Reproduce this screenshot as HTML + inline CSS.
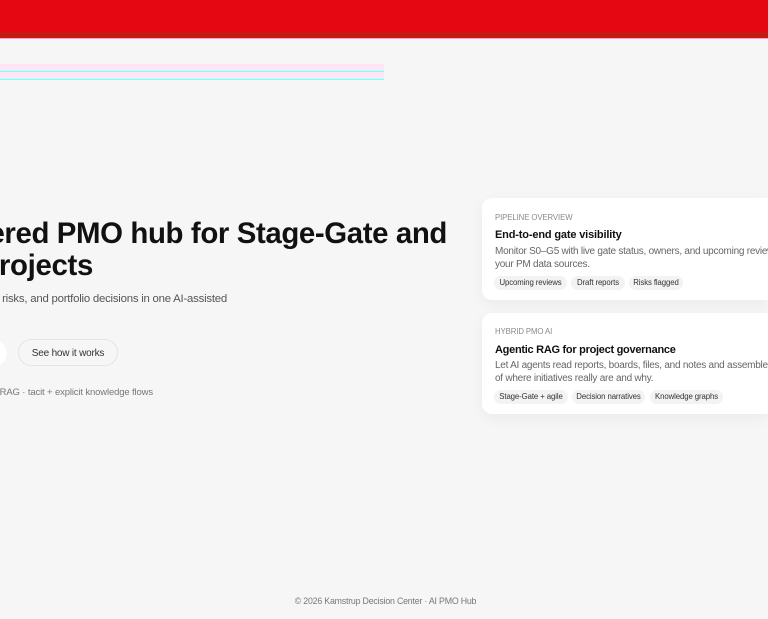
<!DOCTYPE html>
<html lang="en">
<head>
<meta charset="utf-8">
<title>Kamstrup Decision Center</title>
<style>
html,body{margin:0;padding:0;width:768px;height:619px;overflow:hidden;background:#f6f6f6;font-family:"Liberation Sans",sans-serif;color:#111}
#w{position:absolute;left:0;top:0;width:768px;height:619px;overflow:hidden;contain:paint}
.a{position:absolute;white-space:nowrap}
.hdr{position:absolute;left:0;top:0;width:768px;height:32px;background:#e50812}
.hdr2{position:absolute;left:0;top:32px;width:768px;height:6px;background:#c41a12}
.hdr3{position:absolute;left:0;top:38px;width:768px;height:1px;background:#ff9fd0}
.bar{position:absolute;left:0;width:384px}
.card{position:absolute;left:482px;width:286px;background:#fff;border-radius:10px 0 0 10px;box-shadow:0 4px 14px rgba(0,0,0,.05)}
.ey{position:absolute;left:495px;font-size:7.8px;letter-spacing:-.1px;color:#8a8a8a;white-space:nowrap}
.t{position:absolute;left:495px;font-size:11px;font-weight:bold;color:#111;white-space:nowrap}
.d{position:absolute;left:495px;width:273px;overflow:hidden;font-size:10px;letter-spacing:-.25px;color:#666;white-space:nowrap}
.c{position:absolute;height:14px;line-height:14px;background:#f3f3f3;border-radius:7px;font-size:7.8px;letter-spacing:-.1px;color:#333;text-align:center;white-space:nowrap}
</style>
</head>
<body>
<div id="w">
<div class="hdr"></div><div class="hdr2"></div><div class="hdr3"></div>
<div class="bar" style="top:64px;height:16px;background:#ffe4f5"></div>
<div class="bar" style="top:70px;height:1px;background:#c6fbf5"></div>
<div class="bar" style="top:71px;height:1px;background:#7ffcf5"></div>
<div class="bar" style="top:78px;height:1px;background:#c6fbf5"></div>
<div class="bar" style="top:79px;height:1px;background:#7ffcf5"></div>

<div class="a" style="right:321px;top:216px;font-size:29.4px;letter-spacing:-.38px;line-height:36px;font-weight:bold;color:#111">AI-powered PMO hub for Stage-Gate and</div>
<div class="a" style="right:675px;top:248px;font-size:29.4px;letter-spacing:-.33px;line-height:36px;font-weight:bold;color:#111">agile projects</div>
<div class="a" style="right:541px;top:292px;font-size:11.4px;letter-spacing:-.23px;line-height:15px;color:#555">Bring gates, risks, and portfolio decisions in one AI-assisted</div>

<div class="a" style="left:-60px;top:340px;width:67px;height:26px;background:#fff;border-radius:13px"></div>
<div class="a" style="left:18px;top:339px;width:98px;height:25px;border:1px solid #e4e4e4;border-radius:14px;text-align:center;line-height:27px;font-size:10px;letter-spacing:-.2px;color:#333">See how it works</div>
<div class="a" style="right:615px;top:386px;font-size:9.5px;letter-spacing:-.14px;line-height:13px;color:#777">Agentic RAG · tacit + explicit knowledge flows</div>

<div class="card" style="top:198px;height:102px"></div>
<div class="ey" style="top:213px">PIPELINE OVERVIEW</div>
<div class="t" style="top:229px;letter-spacing:-.16px">End-to-end gate visibility</div>
<div class="d" style="top:246px">Monitor S0–G5 with live gate status, owners, and upcoming reviews from</div>
<div class="d" style="top:259px">your PM data sources.</div>
<div class="c" style="left:494px;top:276px;width:73px">Upcoming reviews</div>
<div class="c" style="left:571px;top:276px;width:54px">Draft reports</div>
<div class="c" style="left:629px;top:276px;width:54px">Risks flagged</div>

<div class="card" style="top:313px;height:101px"></div>
<div class="ey" style="top:327px">HYBRID PMO AI</div>
<div class="t" style="top:344px;letter-spacing:-.28px">Agentic RAG for project governance</div>
<div class="d" style="top:360px">Let AI agents read reports, boards, files, and notes and assemble a view</div>
<div class="d" style="top:373px">of where initiatives really are and why.</div>
<div class="c" style="left:494px;top:390px;width:74px">Stage-Gate + agile</div>
<div class="c" style="left:572px;top:390px;width:73px">Decision narratives</div>
<div class="c" style="left:650px;top:390px;width:73px">Knowledge graphs</div>

<div class="a" style="left:0;width:768px;top:595px;text-align:center;text-indent:3px;font-size:8.8px;letter-spacing:-.2px;line-height:12px;color:#777">© 2026 Kamstrup Decision Center · AI PMO Hub</div>
</div>
</body>
</html>
